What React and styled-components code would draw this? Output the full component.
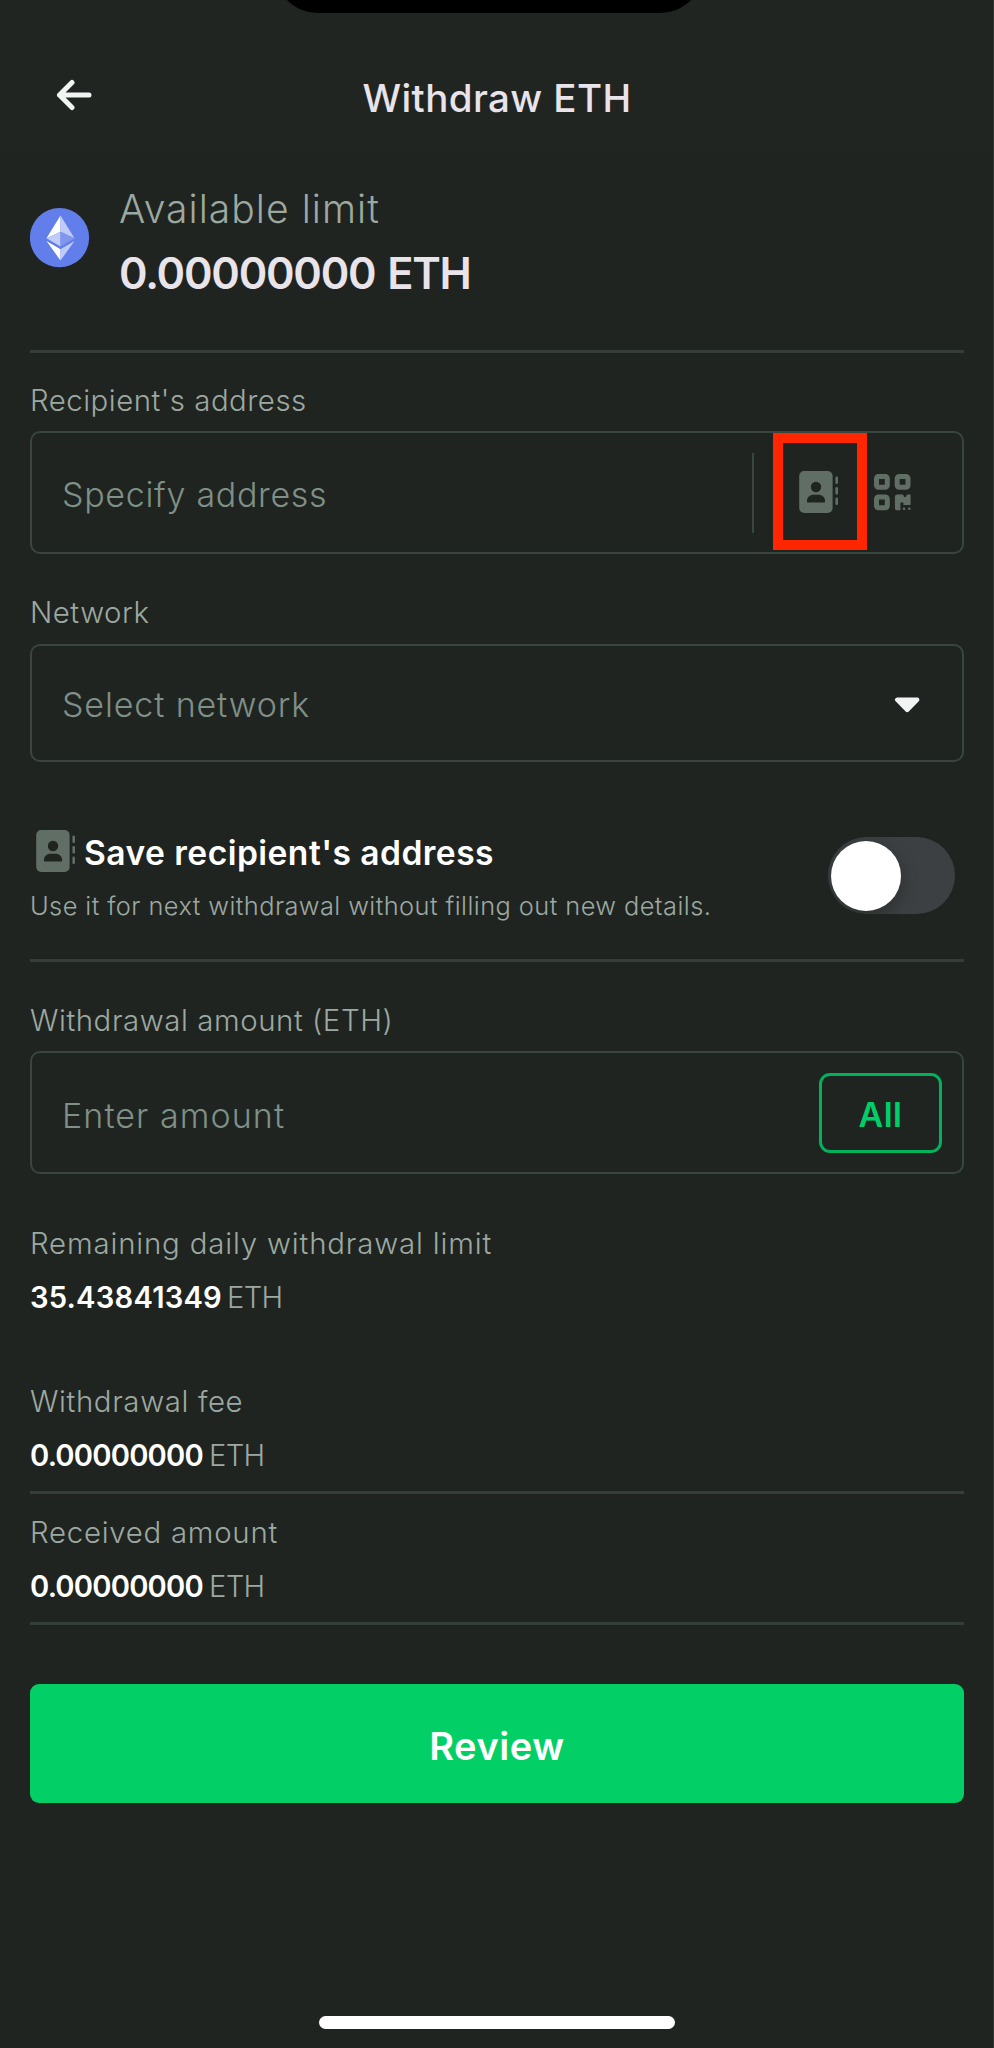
import React from "react";
import styled, { createGlobalStyle } from "styled-components";

const Global = createGlobalStyle`
  *, *::before, *::after { box-sizing: border-box; }
  html, body { margin: 0; background: #202421; }
  body { font-family: Inter, "Liberation Sans", sans-serif; -webkit-font-smoothing: antialiased; }
  button { font: inherit; background: none; border: 0; padding: 0; color: inherit; }
  svg { display: block; flex: none; }
`;

const Screen = styled.div`
  position: relative;
  display: flex;
  flex-direction: column;
  width: 994px;
  height: 2048px;
  overflow: hidden;
  background: #202421;
  border-right: 1px solid #343936;
`;

const Notch = styled.div`
  position: absolute;
  top: -60px;
  left: 274px;
  width: 430px;
  height: 73px;
  border-radius: 0 0 44px 44px;
  background: #000;
`;

const Header = styled.header`
  display: grid;
  grid-template-columns: 110px 1fr 109px;
  align-items: center;
  height: 150px;
  padding-top: 46px;
  background: #212522;
`;

const BackButton = styled.button`
  display: flex;
  justify-content: flex-end;
  padding: 0 18px 6px 0;
`;

const Title = styled.h1`
  margin: 0;
  text-align: center;
  font-size: 38.5px;
  line-height: 48px;
  font-weight: 550;
  letter-spacing: ${(p) => p.$track}px;
  color: #e9e3ea;
`;

const Main = styled.main`
  display: flex;
  flex-direction: column;
  padding: 0 29px 0 30px;
`;

const Summary = styled.section`
  display: flex;
  gap: 29px;
  height: 200px;
  padding-top: 32px;
`;

const CoinIcon = styled.svg`
  margin-top: 26px;
`;

const SummaryText = styled.div`
  display: flex;
  flex-direction: column;
`;

const LimitLabel = styled.div`
  font-size: 39px;
  line-height: 53px;
  font-weight: 350;
  letter-spacing: ${(p) => p.$track}px;
  color: #9ca9a2;
`;

const LimitValue = styled.div`
  margin-top: 10px;
  font-size: 43.3px;
  line-height: 56px;
  font-weight: 560;
  letter-spacing: ${(p) => p.$track}px;
  word-spacing: 2px;
  color: #e9e3ea;
`;

const Divider = styled.hr`
  width: 100%;
  height: 3px;
  margin: ${(p) => p.$top || 0}px 0 0;
  border: 0;
  background: #343f3a;
`;

const Label = styled.div`
  height: 40px;
  margin-top: ${(p) => p.$top || 0}px;
  font-size: 29.4px;
  line-height: 40px;
  font-weight: 350;
  letter-spacing: ${(p) => p.$track}px;
  white-space: nowrap;
  color: #9ca9a2;
`;

const Field = styled.div`
  display: flex;
  align-items: center;
  height: ${(p) => p.$height}px;
  margin-top: ${(p) => p.$top}px;
  padding: 0 ${(p) => p.$right}px 0 30px;
  border: 2px solid #39453f;
  border-radius: 10px;
`;

const Placeholder = styled.span`
  flex: 1;
  padding-top: ${(p) => p.$drop || 0}px;
  font-size: 34px;
  line-height: 44px;
  font-weight: 350;
  letter-spacing: ${(p) => p.$track}px;
  color: #7f9087;
`;

const FieldRule = styled.span`
  width: 2px;
  height: 80px;
  margin-right: 19px;
  background: #3a4640;
`;

const Highlight = styled.span`
  display: flex;
  align-items: center;
  width: 94px;
  height: 117px;
  margin: 0 7px 2px 0;
  padding: 1px 0 0 16px;
  border: 10px solid #ff2600;
`;

const CaretIcon = styled.svg`
  margin-top: 3px;
`;

const SaveRow = styled.section`
  display: flex;
  justify-content: space-between;
  height: 197px;
  padding: 68px 9px 0 0;
`;

const SaveTitle = styled.div`
  display: flex;
  height: 44px;
  padding-left: 6px;
  font-size: 33.6px;
  line-height: 44px;
  font-weight: 600;
  letter-spacing: ${(p) => p.$track}px;
  color: #fff;

  svg { margin-right: 8px; }
  span { padding-top: 1px; }
`;

const SaveHint = styled.div`
  margin-top: 12px;
  font-size: 25.4px;
  line-height: 40px;
  font-weight: 350;
  letter-spacing: ${(p) => p.$track}px;
  white-space: nowrap;
  color: #9ca9a2;
`;

const Toggle = styled.button`
  width: 127px;
  height: 77px;
  margin-top: 7px;
  padding: 0 3px;
  border-radius: 39px;
  background: #3d4042;
  overflow: hidden;
`;

const Knob = styled.span`
  display: block;
  width: 70px;
  height: 70px;
  border-radius: 50%;
  background: #fff;
  box-shadow: 0 6px 18px rgba(0, 0, 0, 0.28);
`;

const AllButton = styled.button`
  width: 123px;
  height: 80px;
  padding-top: 5px;
  border: 3px solid #02b15c;
  border-radius: 11px;
  font-size: 34px;
  line-height: 44px;
  font-weight: 600;
  letter-spacing: ${(p) => p.$track}px;
  color: #00cf69;
`;

const Amount = styled.div`
  display: flex;
  height: 40px;
  margin-top: 14px;
  font-size: 29.2px;
  line-height: 40px;
`;

const AmountValue = styled.span`
  font-weight: 600;
  letter-spacing: ${(p) => p.$track}px;
  color: #fff;
`;

const AmountUnit = styled.span`
  margin-left: ${(p) => p.$gap}px;
  font-weight: 350;
  letter-spacing: -0.7px;
  color: #9ca9a2;
`;

const ReviewButton = styled.button`
  height: 119px;
  margin-top: 59px;
  padding-top: 5px;
  border-radius: 9px;
  background: #02d067;
  font-size: 38px;
  font-weight: 600;
  letter-spacing: ${(p) => p.$track}px;
  color: #fff;
`;

const HomeIndicator = styled.div`
  width: 356px;
  height: 13px;
  margin: auto auto 19px 319px;
  border-radius: 7px;
  background: #fff;
`;

function BookIcon() {
  return (
    <svg width="40" height="42" viewBox="0 0 40 42">
      <rect x="0.2" y="0" width="33.4" height="42" rx="5" fill="#616e65" />
      <circle cx="17" cy="16" r="5.2" fill="#202421" />
      <path d="M8 31.4V29.5C8 26.5 11 23.8 14.5 23.8h5c3.5 0 6.5 2.7 6.5 5.7v1.9z" fill="#202421" />
      <g fill="#616e65">
        <rect x="36.4" y="5.5" width="2.6" height="7.5" rx="1.2" />
        <rect x="36.4" y="16" width="2.6" height="7.5" rx="1.2" />
        <rect x="36.4" y="26.5" width="2.6" height="7.5" rx="1.2" />
      </g>
    </svg>
  );
}

function QrIcon() {
  return (
    <svg width="37" height="37" viewBox="0 0 37 37">
      <g fill="none" stroke="#616e65" strokeWidth="5">
        <rect x="2.5" y="2.5" width="10.8" height="10.8" rx="2" />
        <rect x="23.2" y="2.5" width="10.8" height="10.8" rx="2" />
        <rect x="2.5" y="23" width="10.8" height="10.8" rx="2" />
      </g>
      <g fill="#616e65">
        <path d="M20.9 22.7q0-2.2 2.2-2.2H28.6q.6 0 .8.8.4 1.9 1.6 1.9t1.6-1.9q.2-.8.8-.8H36.6V31H29.4V28.4H26.4V36.2H22.8q-1.9 0-1.9-1.9z" />
        <circle cx="30" cy="34.7" r="1.3" />
        <circle cx="35.3" cy="34.7" r="1.3" />
      </g>
    </svg>
  );
}

function EthIcon() {
  return (
    <CoinIcon width="60" height="60" viewBox="0 0 60 60">
      <circle cx="29.5" cy="29.7" r="29.6" fill="#627eea" />
      <path d="M30.5 7.5V23.8L16.5 30.3z" fill="#fff" />
      <path d="M30.5 7.5V23.8L44.5 30.3z" fill="#c0cbf7" />
      <path d="M16.5 30.3L30.5 23.8V38.6z" fill="#c0cbf7" />
      <path d="M44.5 30.3L30.5 23.8V38.6z" fill="#8197ee" />
      <path d="M16.5 33L30.5 41.3V52.5z" fill="#fff" />
      <path d="M44.5 33L30.5 41.3V52.5z" fill="#c0cbf7" />
    </CoinIcon>
  );
}

function Quantity({ value, track, gap }) {
  return (
    <Amount>
      <AmountValue $track={track}>{value}</AmountValue>
      <AmountUnit $gap={gap}>ETH</AmountUnit>
    </Amount>
  );
}

export default function App() {
  return (
    <>
      <Global />
      <Screen>
        <Notch />
        <Header>
          <BackButton aria-label="Back">
            <svg width="36" height="32" viewBox="0 0 36 32" fill="none" stroke="#f1f4f2" strokeWidth="5" strokeLinecap="round" strokeLinejoin="round">
              <path d="M16 3.5L3.5 16L16 28.5M3.5 16H33" />
            </svg>
          </BackButton>
          <Title $track={0.4}>Withdraw ETH</Title>
        </Header>
        <Main>
          <Summary>
            <EthIcon />
            <SummaryText>
              <LimitLabel $track={1.05}>Available limit</LimitLabel>
              <LimitValue $track={-1.2}>0.00000000 ETH</LimitValue>
            </SummaryText>
          </Summary>
          <Divider />

          <Label $top={28} $track={0.5}>Recipient's address</Label>
          <Field $height={123} $top={10} $right={51}>
            <Placeholder $track={0.7} $drop={5}>Specify address</Placeholder>
            <FieldRule />
            <Highlight>
              <BookIcon />
            </Highlight>
            <QrIcon />
          </Field>

          <Label $top={39} $track={0.5}>Network</Label>
          <Field $height={118} $top={11} $right={42}>
            <Placeholder $track={0.87} $drop={3}>Select network</Placeholder>
            <CaretIcon width="26" height="16" viewBox="0 0 26 16">
              <path d="M3.2 2.8H23.2L13.2 13z" fill="#f1f4f2" stroke="#f1f4f2" strokeWidth="4.4" strokeLinejoin="round" />
            </CaretIcon>
          </Field>

          <SaveRow>
            <div>
              <SaveTitle $track={0.46}>
                <BookIcon />
                <span>Save recipient's address</span>
              </SaveTitle>
              <SaveHint $track={0.43}>Use it for next withdrawal without filling out new details.</SaveHint>
            </div>
            <Toggle role="switch" aria-checked="false">
              <Knob />
            </Toggle>
          </SaveRow>
          <Divider />

          <Label $top={39} $track={0.57}>Withdrawal amount (ETH)</Label>
          <Field $height={123} $top={10} $right={20}>
            <Placeholder $track={1.07} $drop={6}>Enter amount</Placeholder>
            <AllButton $track={0.5}>All</AllButton>
          </Field>

          <Label $top={50} $track={0.84}>Remaining daily withdrawal limit</Label>
          <Quantity value="35.43841349" track={0.2} gap={5} />

          <Label $top={64} $track={0.63}>Withdrawal fee</Label>
          <Quantity value="0.00000000" track={-0.8} gap={6} />
          <Divider $top={15} />
          <Label $top={19} $track={0.73}>Received amount</Label>
          <Quantity value="0.00000000" track={-0.8} gap={6} />
          <Divider $top={15} />

          <ReviewButton $track={0.6}>Review</ReviewButton>
        </Main>
        <HomeIndicator />
      </Screen>
    </>
  );
}
